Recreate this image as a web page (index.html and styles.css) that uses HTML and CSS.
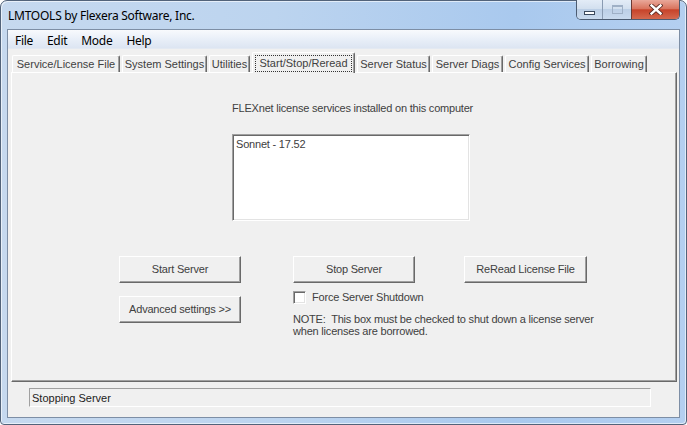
FILE: index.html
```html
<!DOCTYPE html>
<html>
<head>
<meta charset="utf-8">
<link rel="stylesheet" href="styles.css">
</head>
<body>
<div class="window">
  <div class="titlebar">
    <span class="title">LMTOOLS by Flexera Software, Inc.</span>
    <div class="caption-btns">
      <div class="cbtn cbtn-min"><span class="min-glyph"></span></div>
      <div class="cbtn cbtn-max"><span class="max-glyph"></span></div>
      <div class="cbtn cbtn-close">
        <svg width="14" height="11" viewBox="0 0 14 11">
          <path d="M2.5 1.5 L11.5 9.5 M11.5 1.5 L2.5 9.5" stroke="#5a2a22" stroke-width="4.2" stroke-linecap="square" fill="none"/>
          <path d="M2.5 1.5 L11.5 9.5 M11.5 1.5 L2.5 9.5" stroke="#ffffff" stroke-width="2.4" stroke-linecap="square" fill="none"/>
        </svg>
      </div>
    </div>
  </div>
  <div class="client">
    <div class="menubar">
      <span class="menu-item">File</span>
      <span class="menu-item">Edit</span>
      <span class="menu-item">Mode</span>
      <span class="menu-item">Help</span>
    </div>
    <div class="tabs">
      <div class="tab tab-svc">Service/License File</div>
      <div class="tab tab-sys">System Settings</div>
      <div class="tab tab-util">Utilities</div>
      <div class="tab tab-start selected"><span class="focus">Start/Stop/Reread</span></div>
      <div class="tab tab-status">Server Status</div>
      <div class="tab tab-diags">Server Diags</div>
      <div class="tab tab-config">Config Services</div>
      <div class="tab tab-borrow">Borrowing</div>
    </div>
    <div class="panel">
      <div class="services">
        <div class="services-label">FLEXnet license services installed on this computer</div>
        <div class="listbox"><div class="list-item">Sonnet - 17.52</div></div>
      </div>
      <div class="actions-row">
        <div class="btn">Start Server</div>
        <div class="btn btn-stop">Stop Server</div>
        <div class="btn btn-reread">ReRead License File</div>
      </div>
      <div class="options-row">
        <div class="btn btn-adv">Advanced settings &gt;&gt;</div>
        <div class="shutdown">
          <div class="check-line"><span class="checkbox"></span><span class="check-label">Force Server Shutdown</span></div>
          <div class="note">NOTE:&nbsp; This box must be checked to shut down a license server<br>when licenses are borrowed.</div>
        </div>
      </div>
    </div>
    <div class="statusbar">
      <div class="status-field">Stopping Server</div>
    </div>
  </div>
</div>
</body>
</html>
```
FILE: styles.css
```css
* { box-sizing: border-box; }
html, body { margin: 0; padding: 0; }
body {
  width: 687px;
  height: 425px;
  background: #ffffff;
  overflow: hidden;
}
.window {
  width: 687px;
  height: 425px;
  border: 1px solid #52637a;
  border-radius: 7px 7px 4px 4px;
  background: linear-gradient(to right, #c6d9ef 0%, #bcd4ef 40%, #a9c9ee 75%, #b4cff0 100%);
  padding: 0 6px 6px 6px;
  display: flex;
  flex-direction: column;
  box-shadow: inset 1px 1px 0 rgba(255,255,255,0.6), inset -1px -1px 0 rgba(255,255,255,0.6);
}
.titlebar {
  height: 28px;
  display: flex;
  align-items: flex-start;
  justify-content: space-between;
}
.title {
  font-family: "Noto Sans", "Open Sans", sans-serif;
  font-size: 12px;
  line-height: 29px;
  color: #000;
  padding-left: 1px;
  letter-spacing: -0.25px;
}
.caption-btns {
  display: flex;
  margin-top: -1px;
  height: 20px;
  border: 1px solid #4c5c72;
  border-top: none;
  border-radius: 0 0 5px 5px;
  overflow: hidden;
}
.cbtn {
  height: 19px;
  display: flex;
  align-items: center;
  justify-content: center;
}
.cbtn-min {
  width: 26px;
  background: linear-gradient(#e3ecf7 0%, #d3e0ef 45%, #bccfe6 50%, #c9daee 100%);
  border-right: 1px solid #8a9bb2;
}
.cbtn-max {
  width: 29px;
  background: linear-gradient(#e3ecf7 0%, #d3e0ef 45%, #bccfe6 50%, #c9daee 100%);
  border-right: 1px solid #6b3a33;
}
.cbtn-close {
  width: 47px;
  background: linear-gradient(#e9a89a 0%, #d9755f 45%, #c7432a 52%, #d4694f 100%);
}
.min-glyph {
  display: block;
  width: 11px;
  height: 4px;
  margin-top: 6px;
  background: #fff;
  border: 1px solid #3b4a5e;
}
.max-glyph {
  display: block;
  width: 11px;
  height: 9px;
  border: 1px solid #9fb0c6;
  border-top-width: 2px;
  background: transparent;
}
.client {
  flex: 1;
  border: 1px solid #7d8ea5;
  background: #f0f0f0;
  display: flex;
  flex-direction: column;
}
.menubar {
  height: 19px;
  display: flex;
  align-items: center;
  padding-top: 2px;
  background: linear-gradient(#f8fafd 0%, #e9eff8 50%, #dce5f2 100%);
  border-bottom: 1px solid #e3e9f2;
}
.menu-item {
  font-family: "Noto Sans", "Open Sans", sans-serif;
  font-size: 12px;
  color: #000;
  padding: 0 7px;
  letter-spacing: -0.3px;
  line-height: 17px;
}
.tabs {
  height: 23px;
  display: flex;
  align-items: flex-end;
  padding-left: 4px;
  position: relative;
  z-index: 2;
}
.tab {
  height: 17px;
  font-family: "Liberation Sans", Arial, sans-serif;
  font-size: 11px;
  color: #404040;
  line-height: 15px;
  text-align: center;
  white-space: nowrap;
  background: #f0f0f0;
  border-top: 1px solid #ffffff;
  border-left: 1px solid #ffffff;
  border-right: 1px solid #696969;
  box-shadow: inset -1px 0 0 #a0a0a0;
  border-radius: 2px 2px 0 0;
  margin-right: 2px;
  padding-top: 1px;
}
.tab.selected {
  height: 21px;
  margin-bottom: -1px;
  padding: 2px 2px 0 2px;
  line-height: 15px;
}
.focus {
  display: block;
  border: 1px dotted #333;
  height: 17px;
  line-height: 15px;
}
.tab-svc { width: 108px; }
.tab-sys { width: 85px; }
.tab-util { width: 41px; }
.tab-start { width: 103px; }
.tab-status { width: 73px; }
.tab-diags { width: 71px; }
.tab-config { width: 84px; }
.tab-borrow { width: 56px; }
.panel {
  height: 310px;
  margin: 0 2px 0 3px;
  border-top: 1px solid #ffffff;
  border-left: 1px solid #ffffff;
  border-right: 1px solid #696969;
  border-bottom: 1px solid #696969;
  box-shadow: inset -1px -1px 0 #a0a0a0;
  padding: 29px 0 0 107px;
  font-family: "Liberation Sans", Arial, sans-serif;
  font-size: 11px;
  letter-spacing: -0.2px;
  color: #404040;
}
.services {
  margin-left: 113px;
}
.services-label {
  line-height: 13px;
  height: 13px;
  white-space: nowrap;
}
.listbox {
  margin-top: 19px;
  width: 238px;
  height: 87px;
  background: #ffffff;
  border-top: 1px solid #a0a0a0;
  border-left: 1px solid #a0a0a0;
  border-right: 1px solid #ffffff;
  border-bottom: 1px solid #ffffff;
  box-shadow: inset 1px 1px 0 #696969, inset -1px -1px 0 #e3e3e3;
  padding: 3px 3px;
}
.list-item {
  line-height: 13px;
}
.actions-row {
  margin-top: 35px;
  display: flex;
}
.btn {
  width: 122px;
  height: 27px;
  display: flex;
  align-items: center;
  justify-content: center;
  background: #f0f0f0;
  border-top: 1px solid #ffffff;
  border-left: 1px solid #ffffff;
  border-right: 1px solid #696969;
  border-bottom: 1px solid #696969;
  box-shadow: inset -1px -1px 0 #a0a0a0;
  white-space: nowrap;
  padding-bottom: 1px;
}
.btn-stop { margin-left: 52px; }
.btn-reread { margin-left: 49px; width: 123px; }
.options-row {
  display: flex;
  align-items: flex-start;
  margin-top: 8px;
}
.btn-adv { margin-top: 5px; }
.shutdown {
  margin-left: 52px;
}
.check-line {
  display: flex;
  align-items: center;
  height: 13px;
}
.checkbox {
  width: 13px;
  height: 13px;
  background: #ffffff;
  border-top: 1px solid #a0a0a0;
  border-left: 1px solid #a0a0a0;
  border-right: 1px solid #ffffff;
  border-bottom: 1px solid #ffffff;
  box-shadow: inset 1px 1px 0 #696969, inset -1px -1px 0 #e3e3e3;
}
.check-label {
  margin-left: 6px;
  line-height: 13px;
  white-space: nowrap;
}
.note {
  margin-top: 9px;
  line-height: 12px;
  white-space: nowrap;
}
.statusbar {
  flex: 1;
  padding: 6px 0 0 21px;
}
.status-field {
  width: 622px;
  height: 19px;
  border-top: 1px solid #a0a0a0;
  border-left: 1px solid #a0a0a0;
  border-right: 1px solid #ffffff;
  border-bottom: 1px solid #ffffff;
  font-family: "Liberation Sans", Arial, sans-serif;
  font-size: 11px;
  color: #222;
  line-height: 18px;
  padding-left: 2px;
}
```
